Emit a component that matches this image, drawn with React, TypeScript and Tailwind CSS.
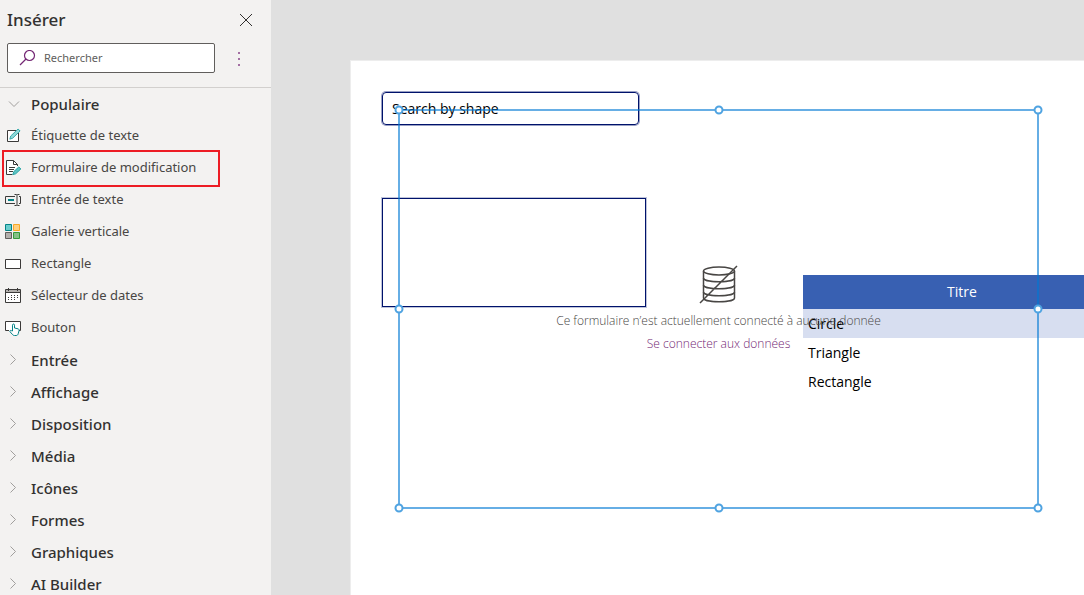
import { useState } from "react";
import type { ReactNode } from "react";

const CATEGORIES = ["Entrée", "Affichage", "Disposition", "Média", "Icônes", "Formes", "Graphiques", "AI Builder"];

const SHAPES = ["Circle", "Triangle", "Rectangle"];

// Resize grips around the selected form
const HANDLES = [
  "left-0 top-0",
  "left-1/2 top-0",
  "left-full top-0",
  "left-0 top-1/2",
  "left-full top-1/2",
  "left-0 top-full",
  "left-1/2 top-full",
  "left-full top-full",
];

function Icon({ children }: { children: ReactNode }) {
  return (
    <svg width="18" height="18" viewBox="0 0 18 18" fill="none" stroke="#3b3a39" className="shrink-0">
      {children}
    </svg>
  );
}

const POPULAR = [
  {
    label: "Étiquette de texte",
    icon: (
      <Icon>
        <path d="M12 3.5H3.5v11h11V6" fill="#fff" />
        <path d="M5.800 12.200l.9-3.200 7.400-7 2 2-7.400 7.200z" fill="#8fd8d8" stroke="#2aa5a5" strokeWidth="0.9" />
      </Icon>
    ),
  },
  {
    label: "Formulaire de modification",
    highlighted: true,
    icon: (
      <Icon>
        <path d="M13.500 7V5.500l-4-4h-7v14h6" fill="#fff" />
        <path d="M9.500 1.500v4h4M5 8.500h6M5 10.500h5M5 12.500h4" />
        <path d="M8.800 15.600l1-3 5-4.600 2.100 1.900-5.200 4.900z" fill="#5fc4c4" stroke="#2aa5a5" />
      </Icon>
    ),
  },
  {
    label: "Entrée de texte",
    icon: (
      <Icon>
        <path d="M11 5.500H1.500v7H11M15 5.500h1.500v7H15" />
        <path d="M4 9h6" stroke="#038387" strokeWidth="2" />
        <path d="M10.500 3.500h2l.5.500.5-.500h2M10.500 14.500h2l.5-.500.5.500h2M13 4v10" />
      </Icon>
    ),
  },
  {
    label: "Galerie verticale",
    icon: (
      <Icon>
        <path d="M1.500 1.500h6v6h-6z" fill="#69cdcd" stroke="#038387" />
        <path d="M9.500 1.500h6v6h-6z" fill="#ffd07f" stroke="#f7a928" />
        <path d="M1.500 9.500h6v6h-6z" fill="#b3b0ad" stroke="#605e5c" />
        <path d="M9.500 9.500h6v6h-6z" fill="#85c187" stroke="#359b3a" />
      </Icon>
    ),
  },
  {
    label: "Rectangle",
    icon: (
      <Icon>
        <path d="M1.500 4.500h15v9h-15z" fill="#fff" />
      </Icon>
    ),
  },
  {
    label: "Sélecteur de dates",
    icon: (
      <Icon>
        <path d="M1.500 2.500h15v13h-15z" fill="#fff" />
        <path d="M2 3h14v2H2z" fill="#b3b0ad" stroke="none" />
        <path d="M1.500 5.500h15M4.500 1v3M13.500 1v3" />
        <path d="M7 8.500h7M4 10.500h10M4 12.500h7" strokeDasharray="1 2" />
      </Icon>
    ),
  },
  {
    label: "Bouton",
    icon: (
      <Icon>
        <path d="M5 11.500H1.500v-9h15v9H15" fill="#fff" />
        <path
          d="M8.500 12V6.200c0-1.600 2-1.600 2 0V9l3.500.8c1 .3 1.300.8 1 2l-.8 3c-.4 1.200-1 1.700-2.200 1.700h-1.500c-1 0-1.600-.4-2.200-1.200L6 12.700c-.5-1 .6-1.700 1.400-1z"
          fill="#fff"
          stroke="#038387"
        />
      </Icon>
    ),
  },
];

function Chevron({ open = false }: { open?: boolean }) {
  return (
    <svg width="12" height="12" viewBox="0 0 12 12" fill="none" stroke="#a19f9d" className="shrink-0">
      <path d={open ? "M1 3.500l5 5 5-5" : "M2.500 0.500l5 5-5 5"} />
    </svg>
  );
}

function InsertPanel() {
  const [query, setQuery] = useState("");
  const items = POPULAR.filter((item) => item.label.toLowerCase().includes(query.toLowerCase()));

  return (
    <aside className="w-[271px] shrink-0 bg-[#f3f2f1] text-[#323130]">
      <header className="flex h-[39px] items-center justify-between pl-[7px] pr-[17px]">
        <h1 className="text-[17px] font-medium">Insérer</h1>
        <button type="button" aria-label="Fermer" className="grid size-4 place-items-center">
          <svg width="14" height="14" viewBox="0 0 14 14" fill="none" stroke="#323130">
            <path d="M1 1l12 12M13 1L1 13" />
          </svg>
        </button>
      </header>

      <div className="flex h-[49px] items-start border-b border-[#d2d0ce] pl-[7px] pt-1">
        <label className="flex h-[30px] w-52 items-center gap-2 rounded-xs border border-[#605e5c] bg-white pl-[11px]">
          <svg width="17" height="17" viewBox="0 0 17 17" fill="none" stroke="#742774" strokeWidth="1.2" className="shrink-0">
            <circle cx="10.500" cy="5.500" r="5" />
            <path d="M7 9L1 15" />
          </svg>
          <input
            type="text"
            value={query}
            onChange={(e) => setQuery(e.target.value)}
            placeholder="Rechercher"
            aria-label="Rechercher"
            className="w-full min-w-0 pt-px text-[11px] outline-none placeholder:text-[#605e5c]"
          />
        </label>
        <button type="button" aria-label="Plus d'options" className="ml-4 grid h-8 w-4 place-items-center">
          <svg width="2" height="14" viewBox="0 0 2 14" fill="#a36fa3">
            <path d="M0 0h2v2H0zM0 6h2v2H0zM0 12h2v2H0z" />
          </svg>
        </button>
      </div>

      <nav>
        <button type="button" className="flex h-8 w-full items-center gap-[11px] pl-2 text-left text-[15px] font-medium">
          <Chevron open />
          Populaire
        </button>
        {items.map((item) => (
          <div key={item.label} className="relative">
            <button
              type="button"
              className="flex h-8 w-full items-center gap-[9px] pl-1 text-left text-[13px] text-[#484644]"
            >
              {item.icon}
              {item.label}
            </button>
            {item.highlighted && (
              <span className="pointer-events-none absolute -top-0.5 left-0.5 h-[37px] w-[218px] border-2 border-[#ed1c24]" />
            )}
          </div>
        ))}
        {CATEGORIES.map((name) => (
          <button
            key={name}
            type="button"
            className="flex h-8 w-full items-center gap-[11px] pl-2 text-left text-[15px] font-medium"
          >
            <Chevron />
            {name}
          </button>
        ))}
      </nav>
    </aside>
  );
}

function ShapeTable() {
  return (
    <table className="absolute left-[452px] top-[214px] w-[318px] border-collapse text-left text-sm text-black">
      <thead>
        <tr className="h-[34px] bg-[#3860b2] text-white">
          <th className="text-center font-normal">Titre</th>
        </tr>
      </thead>
      <tbody>
        {SHAPES.map((shape) => (
          <tr key={shape} className="h-[29px] first:bg-[#d7def0]">
            <td className="px-[5px]">{shape}</td>
          </tr>
        ))}
      </tbody>
    </table>
  );
}

function EditForm() {
  return (
    <section className="absolute left-[47px] top-12 h-[400px] w-[641px] border-2 border-[#0078d4]/60">
      <div className="flex flex-col items-center pt-[154px] font-['Open_Sans',sans-serif] text-xs font-light">
        <svg width="40" height="40" viewBox="0 0 40 40" fill="none" stroke="#484644" strokeWidth="1.500">
          <ellipse cx="20" cy="6" rx="15.500" ry="4" />
          <path d="M4.500 6v27c0 5 31 5 31 0V6" />
          <path d="M4.500 13c0 5 31 5 31 0M4.500 20c0 5 31 5 31 0M4.500 27c0 5 31 5 31 0M1 38L38 1" />
        </svg>
        <p className="mt-1 leading-6 text-[#484644]">Ce formulaire n’est actuellement connecté à aucune donnée</p>
        <a href="#" className="leading-[22px] text-[#742774]">
          Se connecter aux données
        </a>
      </div>
      <div className="absolute -inset-px">
        {HANDLES.map((pos) => (
          <span
            key={pos}
            className={`absolute size-[9px] -translate-1/2 rounded-full border-2 border-[#4fa3e1] bg-white ${pos}`}
          />
        ))}
      </div>
    </section>
  );
}

export default function App() {
  return (
    <div className="flex h-screen overflow-hidden bg-[#e0e0e0] font-['Noto_Sans','Open_Sans',sans-serif]">
      <InsertPanel />
      <main className="min-w-0 flex-1 pl-[79px] pt-[60px]">
        <div className="relative h-full overflow-hidden border-l border-t border-[#ededed] bg-white font-['Open_Sans',sans-serif]">
          <input
            type="text"
            defaultValue="Search by shape"
            aria-label="Search by shape"
            className="absolute left-[31px] top-[31px] h-[33px] w-[257px] rounded-sm border border-[#00126b] px-[9px] text-sm text-black ring-1 ring-[#00126b]/40 outline-none"
          />
          <div className="absolute left-[31px] top-[137px] h-[109px] w-[264px] border border-[#00126b] ring-1 ring-[#00126b]/25" />
          <ShapeTable />
          <EditForm />
        </div>
      </main>
    </div>
  );
}
